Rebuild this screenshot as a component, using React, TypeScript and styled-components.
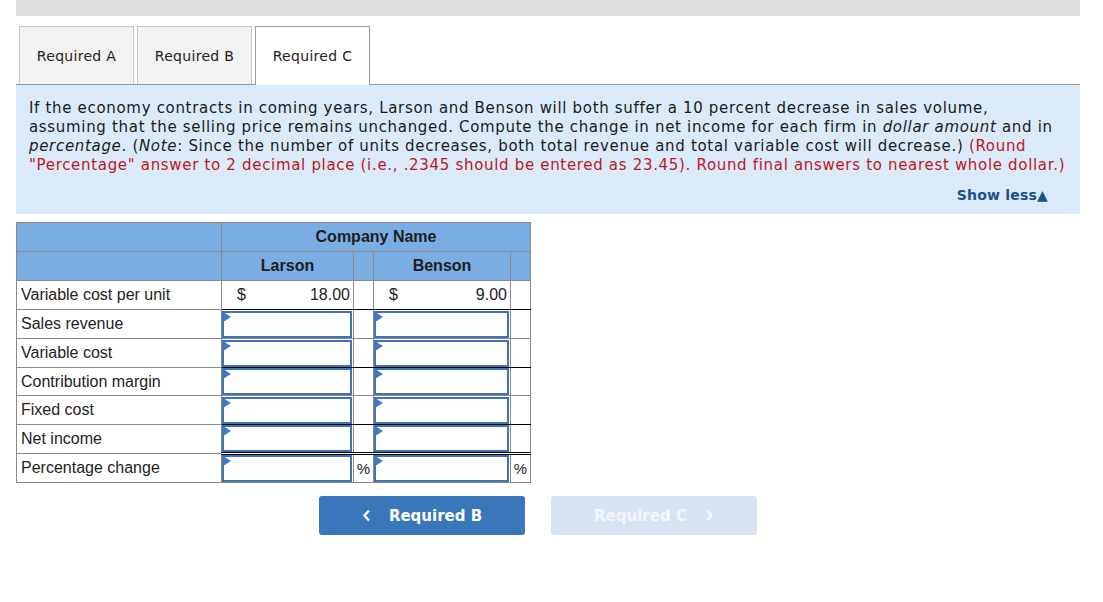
import React from 'react';
import styled, { createGlobalStyle } from 'styled-components';

const GlobalStyle = createGlobalStyle`
  body {
    margin: 0;
    background: #fff;
    font-family: "DejaVu Sans", Verdana, sans-serif;
  }
  *, *::before, *::after {
    box-sizing: border-box;
  }
`;

const Page = styled.div`
  width: 1080px;
  padding-left: 16px;
`;

const TopBar = styled.div`
  height: 16px;
  background: #dedede;
`;

const TabRow = styled.div`
  display: flex;
  gap: 3px;
  margin-top: 10px;
  padding-left: 3px;
  border-bottom: 1px solid #9a9a9a;
`;

const Tab = styled.div<{ $active?: boolean }>`
  width: 115px;
  display: flex;
  align-items: center;
  justify-content: center;
  font-size: 14px;
  letter-spacing: 0.3px;
  color: #222;
  background: ${(p) => (p.$active ? '#fff' : '#f2f2f2')};
  border: 1px solid ${(p) => (p.$active ? '#9a9a9a' : '#c8c8c8')};
  border-bottom: none;
  margin-bottom: ${(p) => (p.$active ? '-1px' : '0')};
  height: ${(p) => (p.$active ? '59px' : '58px')};
`;

const InfoPanel = styled.div`
  background: #daeaf8;
  padding: 14px 0 9px 13px;
  color: #1a1a1a;
  font-size: 15px;
  letter-spacing: 0.68px;
  line-height: 19px;
  white-space: nowrap;
`;

const Red = styled.span`
  color: #c0161d;
`;

const ShowLess = styled.div`
  margin-top: 11px;
  text-align: right;
  padding-right: 32px;
  font-weight: bold;
  font-size: 14px;
  letter-spacing: 0.2px;
  color: #1f4e8c;
`;

const Table = styled.table`
  margin-top: 8px;
  border-collapse: collapse;
  font-family: "Liberation Sans", Arial, sans-serif;
  font-size: 16px;
  color: #222;
  table-layout: fixed;
  width: 514px;
`;

const Row = styled.tr<{ $h?: number }>`
  & > td,
  & > th {
    height: ${(p) => p.$h ?? 29}px;
  }
`;

const Head = styled.th`
  background: #79ade3;
  border: 1px solid #8a8a8a;
  padding: 0;
  font-family: "Liberation Sans", Arial, sans-serif;
  font-size: 16px;
  font-weight: bold;
  text-align: center;
  color: #1e1e1e;
`;

const Label = styled.td`
  border: 1px solid #8a8a8a;
  padding: 0 4px;
  white-space: nowrap;
  font-family: "Liberation Sans", Arial, sans-serif;
  font-size: 16px;
`;

type Rule = 'none' | 'single' | 'double';

const Cell = styled.td<{ $rule?: Rule }>`
  border: 1px solid #8a8a8a;
  border-bottom: ${(p) =>
    p.$rule === 'single' ? '1px solid #000' : p.$rule === 'double' ? '3px double #000' : '1px solid #8a8a8a'};
  padding: 0;
  vertical-align: middle;
  font-family: "Liberation Sans", Arial, sans-serif;
  font-size: 16px;
`;

const Given = styled.div`
  display: flex;
  justify-content: space-between;
  align-items: center;
  padding: 0 3px 0 15px;
`;

const InputBox = styled.div`
  position: relative;
  height: 27px;
  margin: 0 1px 0 0;
  border: 2px solid #3f73b5;
  background: #fff;

  &::before {
    content: '';
    position: absolute;
    left: -1px;
    top: -1px;
    border-left: 8px solid #3f78c4;
    border-top: 5px solid transparent;
    border-bottom: 5px solid transparent;
  }
`;

const Pct = styled.div`
  display: flex;
  align-items: center;
  justify-content: center;
  font-size: 15px;
`;

const ButtonRow = styled.div`
  display: flex;
  gap: 26px;
  padding-left: 303px;
  margin-top: 13px;
`;

const NavButton = styled.div<{ $disabled?: boolean }>`
  width: 206px;
  height: 39px;
  border-radius: 3px;
  display: flex;
  align-items: center;
  justify-content: center;
  gap: 18px;
  font-weight: bold;
  font-size: 15px;
  color: ${(p) => (p.$disabled ? '#f2f6fb' : '#fff')};
  background: ${(p) => (p.$disabled ? '#d6e3f1' : '#3a77ba')};
`;

const Chevron = ({ dir }: { dir: 'left' | 'right' }) => (
  <svg width="9" height="13" viewBox="0 0 9 13">
    <path
      d={dir === 'left' ? 'M7 1.5 L2.5 6.5 L7 11.5' : 'M2 1.5 L6.5 6.5 L2 11.5'}
      fill="none"
      stroke="currentColor"
      strokeWidth="2.4"
    />
  </svg>
);

const rows: { label: string; rule: Rule; pct?: boolean; h?: number }[] = [
  { label: 'Sales revenue', rule: 'none' },
  { label: 'Variable cost', rule: 'single' },
  { label: 'Contribution margin', rule: 'none', h: 27 },
  { label: 'Fixed cost', rule: 'single' },
  { label: 'Net income', rule: 'double', h: 26 },
  { label: 'Percentage change', rule: 'none', pct: true, h: 26 },
];

export default function App() {
  return (
    <Page>
      <GlobalStyle />
      <TopBar />
      <TabRow>
        <Tab>Required A</Tab>
        <Tab>Required B</Tab>
        <Tab $active>Required C</Tab>
      </TabRow>
      <InfoPanel>
        If the economy contracts in coming years, Larson and Benson will both suffer a 10 percent decrease in sales volume,
        <br />
        assuming that the selling price remains unchanged. Compute the change in net income for each firm in{' '}
        <i>dollar amount</i> and in
        <br />
        <i>percentage</i>. (<i>Note</i>: Since the number of units decreases, both total revenue and total variable cost
        will decrease.) <Red>(Round</Red>
        <br />
        <Red>
          "Percentage" answer to 2 decimal place (i.e., .2345 should be entered as 23.45). Round final answers to nearest
          whole dollar.)
        </Red>
        <ShowLess>Show less▲</ShowLess>
      </InfoPanel>
      <Table>
        <colgroup>
          <col style={{ width: 205 }} />
          <col style={{ width: 132 }} />
          <col style={{ width: 20 }} />
          <col style={{ width: 137 }} />
          <col style={{ width: 20 }} />
        </colgroup>
        <thead>
          <Row>
            <Head />
            <Head colSpan={4}>Company Name</Head>
          </Row>
          <Row>
            <Head />
            <Head>Larson</Head>
            <Head />
            <Head>Benson</Head>
            <Head />
          </Row>
        </thead>
        <tbody>
          <Row>
            <Label>Variable cost per unit</Label>
            <Cell $rule="single">
              <Given>
                <span>$</span>
                <span>18.00</span>
              </Given>
            </Cell>
            <Cell $rule="single" />
            <Cell $rule="single">
              <Given>
                <span>$</span>
                <span>9.00</span>
              </Given>
            </Cell>
            <Cell $rule="single" />
          </Row>
          {rows.map((r) => (
            <Row key={r.label} $h={r.h}>
              <Label>{r.label}</Label>
              <Cell $rule={r.rule}>
                <InputBox />
              </Cell>
              <Cell $rule={r.rule}>{r.pct && <Pct>%</Pct>}</Cell>
              <Cell $rule={r.rule}>
                <InputBox />
              </Cell>
              <Cell $rule={r.rule}>{r.pct && <Pct>%</Pct>}</Cell>
            </Row>
          ))}
        </tbody>
      </Table>
      <ButtonRow>
        <NavButton>
          <Chevron dir="left" />
          Required B
        </NavButton>
        <NavButton $disabled>
          Required C
          <Chevron dir="right" />
        </NavButton>
      </ButtonRow>
    </Page>
  );
}
